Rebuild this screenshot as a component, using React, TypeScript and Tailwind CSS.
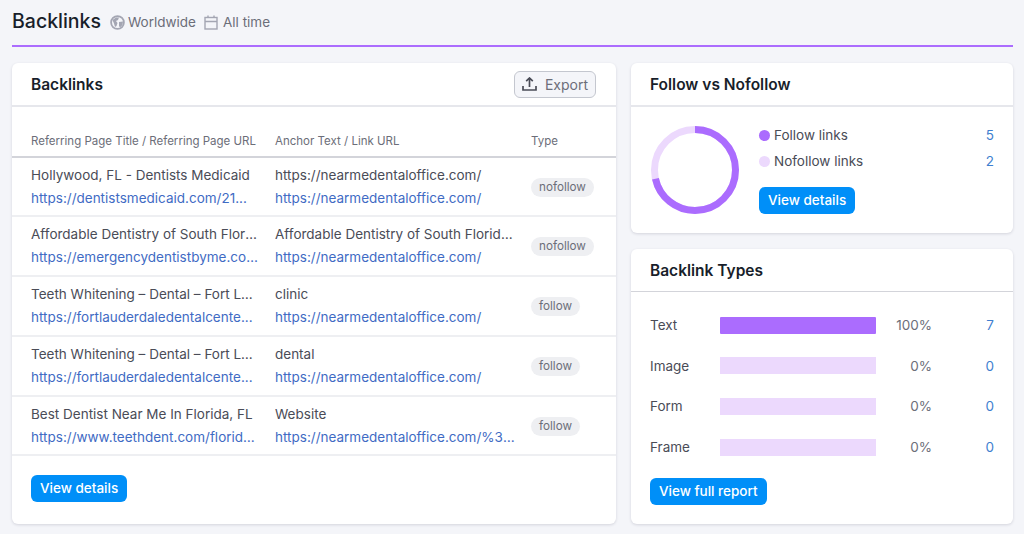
const rows = [
  { title: 'Hollywood, FL - Dentists Medicaid', url: 'https://dentistsmedicaid.com/21...', anchor: 'https://nearmedentaloffice.com/', link: 'https://nearmedentaloffice.com/', type: 'nofollow', h: 'h-[59px]' },
  { title: 'Affordable Dentistry of South Florida Dentist', url: 'https://emergencydentistbyme.com/florida/dentist', anchor: 'Affordable Dentistry of South Florida Dentist', link: 'https://nearmedentaloffice.com/', type: 'nofollow', h: 'h-[60px]' },
  { title: 'Teeth Whitening – Dental – Fort Lauderdale', url: 'https://fortlauderdaledentalcente...', anchor: 'clinic', link: 'https://nearmedentaloffice.com/', type: 'follow', h: 'h-[60px]' },
  { title: 'Teeth Whitening – Dental – Fort Lauderdale', url: 'https://fortlauderdaledentalcente...', anchor: 'dental', link: 'https://nearmedentaloffice.com/', type: 'follow', h: 'h-[60px]' },
  { title: 'Best Dentist Near Me In Florida, FL', url: 'https://www.teethdent.com/florida/best-dentist', anchor: 'Website', link: 'https://nearmedentaloffice.com/%3Futm_source=website', type: 'follow', h: 'h-[59px]' },
]

const types = [
  { name: 'Text', pct: '100%', count: 7, on: true },
  { name: 'Image', pct: '0%', count: 0, on: false },
  { name: 'Form', pct: '0%', count: 0, on: false },
  { name: 'Frame', pct: '0%', count: 0, on: false },
]

const Button = ({ label }: { label: string }) => (
  <button className="h-[27px] px-[9px] rounded-md bg-[#008ff8] text-white text-[13.5px] font-medium leading-[27px]">
    {label}
  </button>
)

const Donut = () => {
  const r = 40.5
  const c = 2 * Math.PI * r
  return (
    <svg width="88" height="88" viewBox="0 0 88 88" className="shrink-0">
      <circle cx="44" cy="44" r={r} fill="none" stroke="#ecd9fd" strokeWidth="7" />
      <circle
        cx="44"
        cy="44"
        r={r}
        fill="none"
        stroke="#ab6cfe"
        strokeWidth="7"
        strokeDasharray={`${(c * 5) / 7} ${c}`}
        transform="rotate(-90 44 44)"
      />
    </svg>
  )
}

export default function App() {
  return (
    <div className="w-[1024px] h-[534px] overflow-hidden bg-[#f4f5f9] pl-3 pr-[11px] font-['Inter',sans-serif] text-[#333]">
      {/* Header */}
      <div className="h-[47px] border-b-2 border-[#ab6cfe] flex items-center pb-[1px]">
        <h1 className="text-[19.5px] font-medium text-[#181e2a] leading-none">Backlinks</h1>
        <div className="flex items-center gap-[3px] ml-[9px] text-[13.5px] text-[#6c6e79]">
          <svg width="15" height="15" viewBox="0 0 15 15" className="shrink-0">
            <circle cx="7.5" cy="7.5" r="6.4" fill="none" stroke="#a4a6b3" strokeWidth="1.8" />
            <path d="M2.5 5 L6 2.5 L9 2.5 L8 5 L6 6 L7.5 8 L6.5 11 L5 12 L4 8.5 Z M9 7 L13 6.5 L12.5 10 L10 12.5 L9 11 Z" fill="#a4a6b3" />
          </svg>
          <span>Worldwide</span>
        </div>
        <div className="flex items-center gap-[5px] ml-[8px] text-[13.5px] text-[#6c6e79]">
          <svg width="14" height="15" viewBox="0 0 14 15" fill="none" stroke="#a4a6b3" strokeWidth="1.4" className="shrink-0">
            <rect x="1" y="2.5" width="12" height="11.5" />
            <path d="M1 6.5 H13 M4 0.5 V3 M10 0.5 V3" />
          </svg>
          <span>All time</span>
        </div>
      </div>

      <div className="flex gap-[15px] mt-[16px]">
        {/* Backlinks table */}
        <div className="w-[604px] h-[461px] bg-white rounded-md shadow-[0_1px_3px_rgba(24,30,60,0.15)] overflow-hidden">
          <div className="h-[44px] border-b-2 border-[#e6e7ec] pl-[19px] pr-[20px] flex items-center justify-between">
            <h2 className="text-[15.5px] font-semibold text-[#181e2a] pt-[1px]">Backlinks</h2>
            <button className="h-[27px] w-[82px] rounded-md border border-[#c4c7cf] bg-[#f4f5f9] flex items-center justify-center gap-[8px] text-[14px] text-[#6c6e79]">
              <svg width="15" height="14" viewBox="0 0 15 14" fill="none" stroke="#4a4c57" strokeWidth="1.7" className="shrink-0">
                <path d="M7.5 10 V1.2 M4.2 4.2 L7.5 1 L10.8 4.2 M1 9 V13 H14 V9" />
              </svg>
              <span>Export</span>
            </button>
          </div>
          <div className="h-[51px] border-b-2 border-[#d3d4da] pl-[19px] pt-[27px] flex text-[11.5px] leading-[15px] text-[#6c6e79]">
            <div className="w-[244px]">Referring Page Title / Referring Page URL</div>
            <div className="w-[256px]">Anchor Text / Link URL</div>
            <div>Type</div>
          </div>
          {rows.map((row, i) => (
            <div key={i} className={`${row.h} border-b-2 border-[#eeeff2] pl-[19px] flex items-start pt-[8px] text-[13.5px] leading-[18px]`}>
              <div className="w-[244px] pr-[15px]">
                <div className="truncate text-[#4a4c57]">{row.title}</div>
                <div className="truncate text-[#3f6bc4] mt-[5px]">{row.url}</div>
              </div>
              <div className="w-[256px] pr-[16px]">
                <div className="truncate text-[#4a4c57]">{row.anchor}</div>
                <div className="truncate text-[#3f6bc4] mt-[5px]">{row.link}</div>
              </div>
              <div className="mt-[12px] h-[19px] px-[8px] rounded-full bg-[#eeeff2] text-[11.7px] leading-[19px] text-[#6c6e79]">
                {row.type}
              </div>
            </div>
          ))}
          <div className="pl-[19px] pt-[19px]">
            <Button label="View details" />
          </div>
        </div>

        <div className="w-[382px] flex flex-col gap-[16px]">
          {/* Follow vs Nofollow */}
          <div className="h-[170px] bg-white rounded-md shadow-[0_1px_3px_rgba(24,30,60,0.15)] overflow-hidden">
            <div className="h-[44px] border-b-2 border-[#e6e7ec] pl-[19px] flex items-center">
              <h2 className="text-[15.5px] font-semibold text-[#181e2a] pt-[1px]">Follow vs Nofollow</h2>
            </div>
            <div className="flex pl-[20px] pr-[19px] pt-[19px] gap-[20px]">
              <Donut />
              <div className="flex-1 text-[13.5px] leading-[18px]">
                <div className="flex items-center justify-between h-[18px]">
                  <div className="flex items-center gap-[4px] text-[#4a4c57]">
                    <span className="w-[11px] h-[11px] rounded-full bg-[#ab6cfe]" />
                    Follow links
                  </div>
                  <span className="text-[#3f7fd0]">5</span>
                </div>
                <div className="flex items-center justify-between h-[18px] mt-[8px]">
                  <div className="flex items-center gap-[4px] text-[#4a4c57]">
                    <span className="w-[11px] h-[11px] rounded-full bg-[#ecd9fd]" />
                    Nofollow links
                  </div>
                  <span className="text-[#3f7fd0]">2</span>
                </div>
                <div className="mt-[17px]">
                  <Button label="View details" />
                </div>
              </div>
            </div>
          </div>

          {/* Backlink Types */}
          <div className="h-[275px] bg-white rounded-md shadow-[0_1px_3px_rgba(24,30,60,0.15)] overflow-hidden">
            <div className="h-[43px] border-b border-[#d3d4da] pl-[19px] flex items-center">
              <h2 className="text-[15.5px] font-semibold text-[#181e2a] pt-[1px]">Backlink Types</h2>
            </div>
            <div className="pl-[19px] pr-[19px] pt-[24.6px]">
              <div className="flex flex-col gap-[23.7px]">
                {types.map((t) => (
                  <div key={t.name} className="flex items-center h-[17px] text-[13.5px] text-[#4a4c57]">
                    <div className="w-[70px]">{t.name}</div>
                    <div className={t.on ? 'w-[156px] h-[17px] rounded-[1px] bg-[#ab6cfe]' : 'w-[156px] h-[17px] bg-[#ecd9fd]'} />
                    <div className="w-[56px] text-right text-[#6c6e79]">{t.pct}</div>
                    <div className="flex-1 text-right text-[#3f7fd0]">{t.count}</div>
                  </div>
                ))}
              </div>
              <div className="mt-[22.3px]">
                <Button label="View full report" />
              </div>
            </div>
          </div>
        </div>
      </div>
    </div>
  )
}
